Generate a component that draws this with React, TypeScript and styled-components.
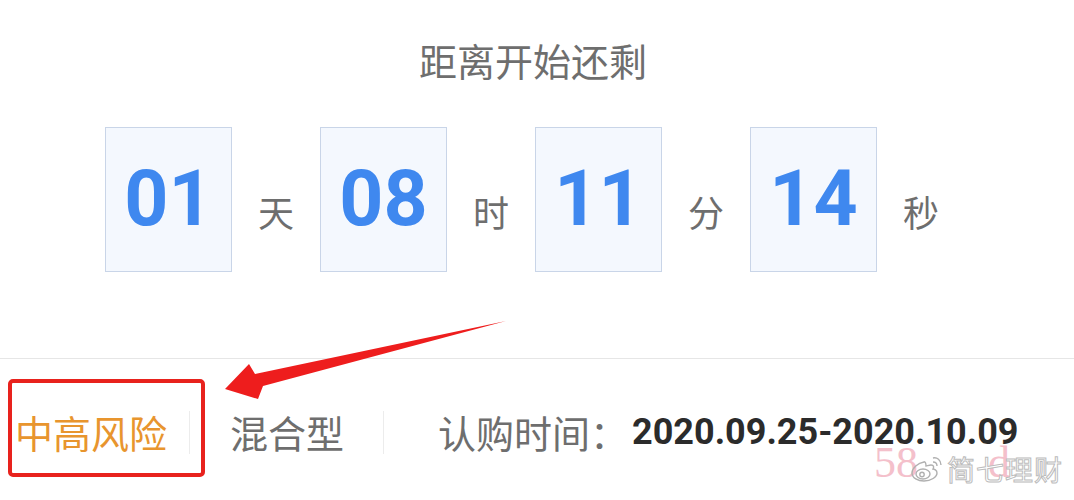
import React from 'react';
import styled, { createGlobalStyle } from 'styled-components';

const Global = createGlobalStyle`
  html, body { margin: 0; padding: 0; background: #ffffff; overflow: hidden; }
  body { font-family: "Noto Sans CJK SC", "Noto Sans", sans-serif; }
`;

const Page = styled.div`
  position: relative;
  width: 1074px;
  height: 500px;
  background: #ffffff;
  display: flex;
  flex-direction: column;
`;

const Title = styled.h1`
  margin: 41px 0 0;
  padding-right: 8px;
  font-size: 38px;
  line-height: 38px;
  font-weight: 400;
  color: #6e6e6e;
  text-align: center;
`;

const Countdown = styled.div`
  margin-top: 48px;
  padding-left: 105px;
  display: flex;
  align-items: center;
`;

const DigitBox = styled.div`
  box-sizing: border-box;
  width: 127px;
  height: 145px;
  border: 1px solid #c9d5e8;
  background: #f4f8fe;
  display: flex;
  align-items: center;
  justify-content: center;
  font-family: Roboto, "Liberation Sans", sans-serif;
  font-weight: 700;
  font-size: 77px;
  line-height: 1;
  color: #3f88ef;
`;

const Unit = styled.span`
  width: 36px;
  margin: 22px 26px 0;
  font-size: 36px;
  line-height: 36px;
  color: #6e6e6e;
`;

const Divider = styled.div`
  margin-top: 86px;
  height: 1px;
  background: #e6e6e6;
`;

const InfoRow = styled.div`
  display: flex;
  align-items: center;
  padding: 54px 0 0 15px;
  height: 38px;
`;

const Tag = styled.span<{ $accent?: boolean }>`
  font-size: 38px;
  line-height: 38px;
  color: ${(p) => (p.$accent ? '#e8952e' : '#6e6e6e')};
  white-space: nowrap;
`;

const Sep = styled.span<{ $left: number; $right: number }>`
  width: 1px;
  height: 43px;
  background: #ececec;
  margin: 0 ${(p) => p.$right}px 0 ${(p) => p.$left}px;
`;

const DateText = styled.span`
  margin-left: 4px;
  font-family: Roboto, "Liberation Sans", sans-serif;
  font-weight: 700;
  font-size: 36px;
  line-height: 38px;
  color: #2b2b2b;
  white-space: nowrap;
`;

const HighlightBox = styled.div`
  position: absolute;
  left: 8px;
  top: 379px;
  width: 197px;
  height: 98px;
  box-sizing: border-box;
  border: 4px solid #e8221d;
  border-radius: 5px;
  pointer-events: none;
`;

const ArrowLayer = styled.svg`
  position: absolute;
  left: 0;
  top: 0;
  pointer-events: none;
`;

const Watermark = styled.div`
  position: absolute;
  left: 874px;
  top: 440px;
  width: 200px;
  height: 56px;
  pointer-events: none;
`;

const WmLetters = styled.div`
  position: absolute;
  left: 0;
  top: 0;
  display: flex;
  gap: 70px;
  font-family: "Liberation Serif", serif;
  font-size: 44px;
  line-height: 46px;
  color: #f4c0cb;
`;

const WmBrand = styled.div`
  position: absolute;
  left: 36px;
  top: 14px;
  display: flex;
  align-items: center;
  gap: 3px;
`;

const WmText = styled.span`
  font-size: 28px;
  line-height: 30px;
  letter-spacing: 1px;
  -webkit-text-stroke: 1px #bcbcbc;
  -webkit-text-fill-color: #ffffff;
`;

const WeiboIcon = () => (
  <svg width="34" height="28" viewBox="0 0 34 28" fill="none" stroke="#b0b0b0" strokeWidth="1.4">
    <path d="M14 7c-6 1-12 6-12 11 0 5 6 8 12 8 7 0 13-4 13-8 0-3-3-4-4-4 1-2 1-4-2-4-2 0-4 1-5 1 0-3-1-5-2-4z" />
    <ellipse cx="13" cy="19" rx="7" ry="5" />
    <circle cx="12" cy="19.5" r="2.2" />
    <path d="M23 3c4-1 8 2 8 7" />
    <path d="M23 7c2 0 4 1 4 4" />
  </svg>
);

const units = [
  { value: '01', unit: '天' },
  { value: '08', unit: '时' },
  { value: '11', unit: '分' },
  { value: '14', unit: '秒' },
];

export default function App() {
  return (
    <>
      <Global />
      <Page>
        <Title>距离开始还剩</Title>
        <Countdown>
          {units.map((u) => (
            <React.Fragment key={u.unit}>
              <DigitBox>{u.value}</DigitBox>
              <Unit>{u.unit}</Unit>
            </React.Fragment>
          ))}
        </Countdown>
        <Divider />
        <InfoRow>
          <Tag $accent>中高风险</Tag>
          <Sep $left={22} $right={40} />
          <Tag>混合型</Tag>
          <Sep $left={39} $right={54} />
          <Tag>认购时间：</Tag>
          <DateText>2020.09.25-2020.10.09</DateText>
        </InfoRow>

        <HighlightBox />
        <ArrowLayer width="1074" height="500" viewBox="0 0 1074 500">
          <polygon
            points="225,389 249,364 255,374 506,321 263,386 258,399"
            fill="#ee1d1d"
          />
        </ArrowLayer>
        <Watermark>
          <WmLetters>
            <span>58</span>
            <span>d</span>
          </WmLetters>
          <WmBrand>
            <WeiboIcon />
            <WmText>简七理财</WmText>
          </WmBrand>
        </Watermark>
      </Page>
    </>
  );
}
